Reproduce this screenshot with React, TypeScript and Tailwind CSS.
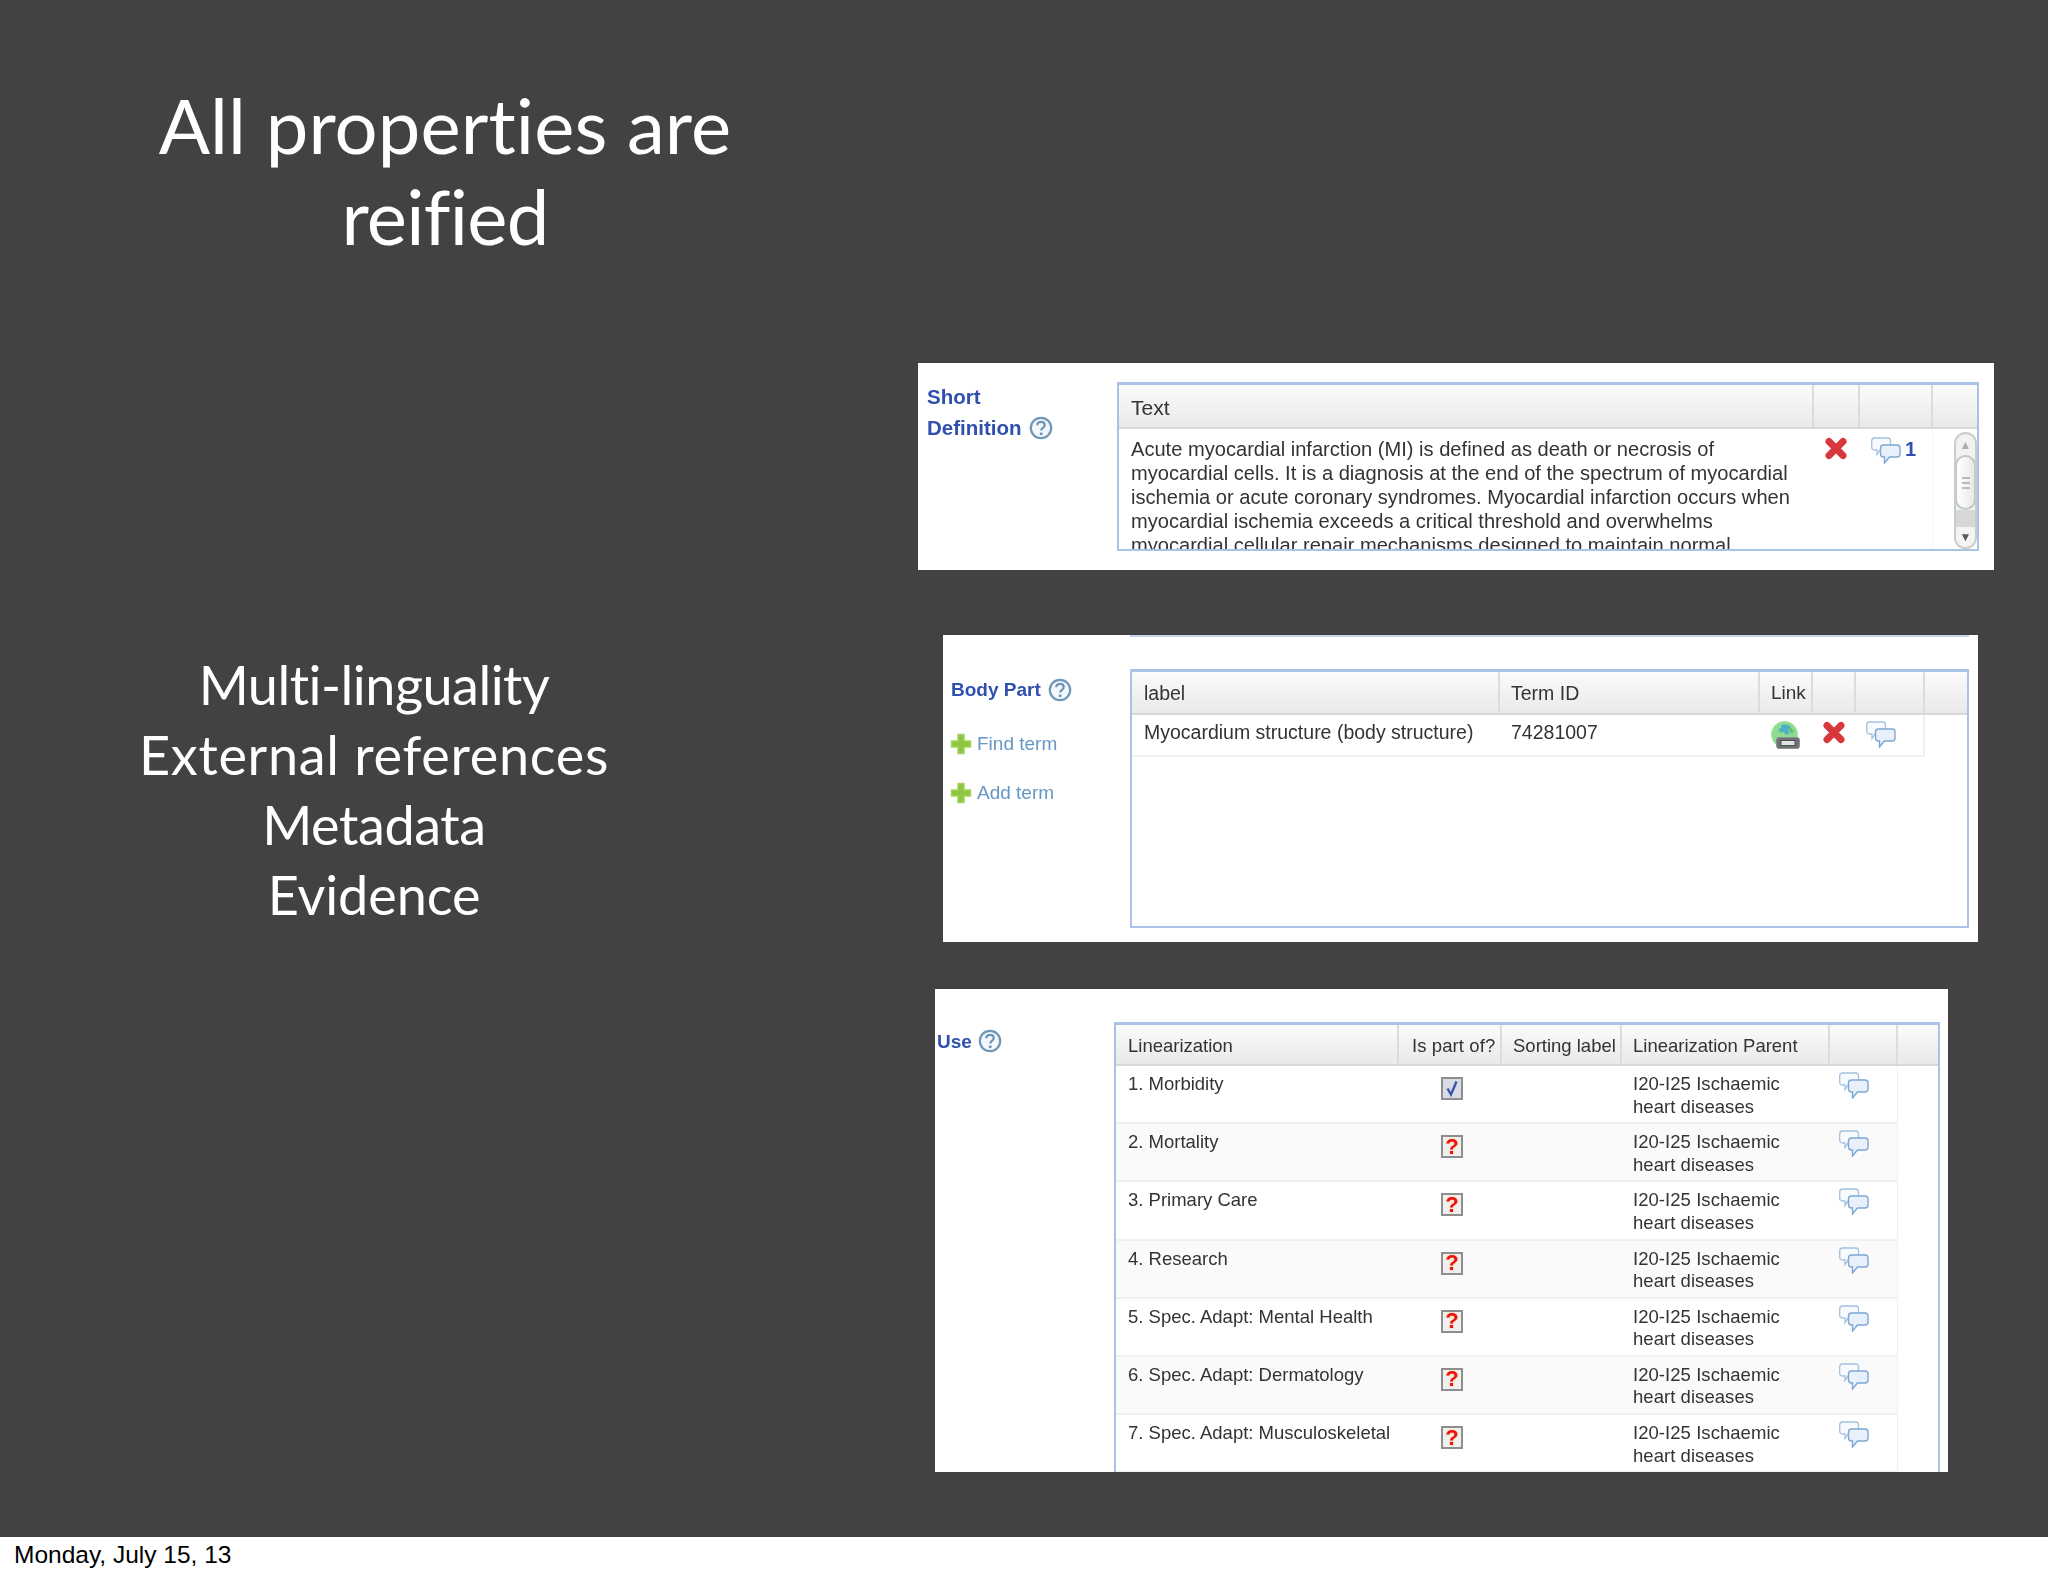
import React from "react";

const sans = "font-['Liberation_Sans',Arial,sans-serif]";

const definition = [
  "Acute myocardial infarction (MI) is defined as death or necrosis of",
  "myocardial cells. It is a diagnosis at the end of the spectrum of myocardial",
  "ischemia or acute coronary syndromes. Myocardial infarction occurs when",
  "myocardial ischemia exceeds a critical threshold and overwhelms",
  "myocardial cellular repair mechanisms designed to maintain normal",
];

const linearizations = [
  { name: "1. Morbidity", checked: true },
  { name: "2. Mortality", checked: false },
  { name: "3. Primary Care", checked: false },
  { name: "4. Research", checked: false },
  { name: "5. Spec. Adapt: Mental Health", checked: false },
  { name: "6. Spec. Adapt: Dermatology", checked: false },
  { name: "7. Spec. Adapt: Musculoskeletal", checked: false },
];

function HelpIcon() {
  return (
    <svg width="24" height="24" viewBox="0 0 24 24" className="shrink-0">
      <circle cx="12" cy="12" r="10.2" fill="#f4f8fc" stroke="#6f97b8" strokeWidth="2.2" />
      <path d="M8.300 9.300c0-2.300 1.700-3.500 3.800-3.500s3.600 1.300 3.600 3.300c0 2.800-3.500 2.700-3.500 5.500" fill="none" stroke="#6f97b8" strokeWidth="2.300" />
      <circle cx="12.200" cy="17.800" r="1.500" fill="#6f97b8" />
    </svg>
  );
}

function RemoveIcon() {
  return (
    <svg width="24" height="23" viewBox="0 0 24 23" className="shrink-0">
      <path d="M5 4.500l14 14M19 4.500l-14 14" fill="none" stroke="#d8373c" strokeWidth="7" strokeLinecap="round" />
    </svg>
  );
}

function ChatIcon() {
  return (
    <svg width="30" height="27" viewBox="0 0 30 27" className="shrink-0">
      <path
        d="M3.500 1h13c1.700 0 3 1.300 3 3v6c0 1.700-1.300 3-3 3H9l-3 4.500V13H3.500C1.800 13 .7 11.700.7 10V4C.7 2.300 1.800 1 3.500 1z"
        fill="#f8fbfe"
        stroke="#a3c1e0"
        strokeWidth="1.300"
      />
      <path
        d="M12.500 8h13.500c1.700 0 3 1.300 3 3v6c0 1.700-1.300 3-3 3h-7.500l-5 6v-6h-1c-1.700 0-3-1.300-3-3v-6c0-1.700 1.300-3 3-3z"
        fill="#e8f1fb"
        stroke="#7fa6d4"
        strokeWidth="1.400"
      />
    </svg>
  );
}

function PlusIcon() {
  return (
    <svg width="22" height="22" viewBox="0 0 22 22" className="shrink-0">
      <path
        d="M8 1.500h6v6.500h6.500v6H14v6.500H8V14H1.500V8H8z"
        fill="#8cc63f"
        stroke="#a3d35c"
        strokeWidth="1.500"
        strokeLinejoin="round"
      />
    </svg>
  );
}

function GlobeIcon() {
  return (
    <svg width="29" height="28" viewBox="0 0 29 28" className="shrink-0">
      <circle cx="13.500" cy="13.500" r="13" fill="#8fdc8f" stroke="#a6dca6" strokeWidth="1" />
      <path d="M10 4c4-1 7-.5 10 2l-3 3 2 3-4 2-2-3-4 .5-1.500-3.500 3-1z" fill="#4db0c4" />
      <path d="M19 6l4 4-2 3-3-4z" fill="#62c070" />
      <rect x="5.500" y="16.500" width="23" height="11" rx="2.500" fill="#6c7272" stroke="#8b9090" />
      <rect x="10" y="19.500" width="14" height="5" fill="#dfe2e2" stroke="#4a4f4f" />
    </svg>
  );
}

function CheckBox({ checked }: { checked: boolean }) {
  return (
    <div className={`w-[22px] h-[23px] border-2 border-[#8e8e8e] flex items-center justify-center ${checked ? "bg-[#d9dce6]" : "bg-[#f1f0ee]"}`}>
      {checked ? (
        <svg width="16" height="17" viewBox="0 0 16 17">
          <path d="M3.500 8.500l3.500 6 5.500-13" fill="none" stroke="#3c57a6" strokeWidth="2.400" />
        </svg>
      ) : (
        <span className={`${sans} text-[22px] font-bold leading-none text-[#ee1111] [text-shadow:0_0_2px_#f7c873]`}>?</span>
      )}
    </div>
  );
}

function HeadCell({ w, children, grow, pad = "pl-[12px]", top = "" }: { w?: string; children?: React.ReactNode; grow?: boolean; pad?: string; top?: string }) {
  return (
    <div className={`${w ?? ""} ${grow ? "flex-1" : "shrink-0"} ${pad} ${top} h-full flex items-center border-r-2 border-[#dcdcdc] last:border-r-0 whitespace-nowrap`}>
      {children}
    </div>
  );
}

function Scrollbar() {
  return (
    <div className="w-[23px] h-[117px] mt-[3px] ml-[21px] rounded-full border-2 border-[#c8cdc8] bg-[#f2f2f2] flex flex-col items-center overflow-hidden">
      <div className="h-[21px] shrink-0 flex items-center justify-center text-[12px] leading-none text-[#a9b0ae]">▲</div>
      <div className="w-[21px] h-[55px] shrink-0 rounded-full border-2 border-[#c3cac6] bg-gradient-to-r from-[#ffffff] to-[#e9e9e9] flex flex-col gap-[3px] items-center justify-center">
        <div className="w-[8px] h-[2px] bg-[#b5bcb9]" />
        <div className="w-[8px] h-[2px] bg-[#b5bcb9]" />
        <div className="w-[8px] h-[2px] bg-[#b5bcb9]" />
      </div>
      <div className="flex-1 w-full bg-[#d6d8d6]" />
      <div className="h-[20px] shrink-0 w-full bg-[#f4f4f4] flex items-center justify-center text-[12px] leading-none text-[#555b5b]">▼</div>
    </div>
  );
}

function ShortDefinition() {
  return (
    <div className={`${sans} w-[1076px] h-[207px] bg-white flex text-[20.100px] text-[#333333]`}>
      <div className="w-[199px] shrink-0 pl-[9px] pt-[18px] text-[20.500px] leading-[31px] font-bold text-[#2f50ae]">
        <div>Short</div>
        <div className="flex items-center gap-[7px]">
          Definition <HelpIcon />
        </div>
      </div>
      <div className="w-[862px] h-[169px] mt-[19px] border-2 border-t-[3px] border-[#a9c3e6] flex flex-col overflow-hidden">
        <div className="h-[44px] shrink-0 flex bg-gradient-to-b from-[#fbfbfb] to-[#e9e9e9] border-b-2 border-[#d8d8d8]">
          <HeadCell w="w-[695px]" top="pt-[4px]">
            <span className="text-[21px]">Text</span>
          </HeadCell>
          <HeadCell w="w-[46px]" />
          <HeadCell w="w-[73px]" />
          <HeadCell grow />
        </div>
        <div className="flex flex-1 min-h-0">
          <div className="w-[695px] shrink-0 pl-[12px] pt-[8px] leading-[24px] whitespace-nowrap">
            {definition.map((line) => (
              <div key={line}>{line}</div>
            ))}
          </div>
          <div className="w-[46px] shrink-0 pt-[8px] pl-[10px]">
            <RemoveIcon />
          </div>
          <div className="w-[73px] shrink-0 pt-[8px] pl-[11px] flex items-start gap-[4px] border-r border-[#f4f4f4] h-full">
            <ChatIcon />
            <span className="font-bold text-[#2f50ae] leading-[24px]">1</span>
          </div>
          <Scrollbar />
        </div>
      </div>
    </div>
  );
}

function BodyPart() {
  return (
    <div className={`${sans} w-[1035px] h-[307px] ml-[25px] bg-white flex flex-col text-[19.500px] text-[#333333]`}>
      <div className="h-[2px] ml-[187px] w-[839px] bg-[#c3d6ea]" />
      <div className="flex flex-1">
        <div className="w-[187px] shrink-0 pl-[7px] pt-[41px] text-[19px]">
          <div className="flex items-center gap-[7px] font-bold text-[#2f50ae] h-[24px]">
            <span className="ml-[1px]">Body Part</span>
            <HelpIcon />
          </div>
          <div className="flex items-center gap-[5px] mt-[30px] text-[#6497c4] h-[24px]">
            <PlusIcon />
            Find term
          </div>
          <div className="flex items-center gap-[5px] mt-[25px] text-[#6497c4] h-[24px]">
            <PlusIcon />
            Add term
          </div>
        </div>
        <div className="w-[839px] h-[259px] mt-[32px] border-2 border-t-[3px] border-[#a9c3e6] flex flex-col">
          <div className="h-[43px] shrink-0 flex bg-gradient-to-b from-[#fbfbfb] to-[#e9e9e9] border-b-2 border-[#d8d8d8]">
            <HeadCell w="w-[368px]" top="pt-[2px]">label</HeadCell>
            <HeadCell w="w-[260px]" pad="pl-[11px]" top="pt-[2px]">Term ID</HeadCell>
            <HeadCell w="w-[53px]" pad="pl-[11px]" top="pt-[2px]"><span className="text-[19px]">Link</span></HeadCell>
            <HeadCell w="w-[43px]" />
            <HeadCell w="w-[69px]" />
            <HeadCell grow />
          </div>
          <div className="h-[42px] w-[793px] flex border-b-2 border-r-2 border-[#efefef]">
            <div className="w-[368px] shrink-0 pl-[12px] pt-[5px] leading-[24px] whitespace-nowrap">Myocardium structure (body structure)</div>
            <div className="w-[260px] shrink-0 pl-[11px] pt-[5px] leading-[24px]">74281007</div>
            <div className="w-[53px] shrink-0 pl-[11px] pt-[6px]">
              <GlobeIcon />
            </div>
            <div className="w-[43px] shrink-0 pl-[9px] pt-[6px]">
              <RemoveIcon />
            </div>
            <div className="pl-[10px] pt-[6px]">
              <ChatIcon />
            </div>
          </div>
        </div>
      </div>
    </div>
  );
}

function UseTable() {
  return (
    <div className={`${sans} w-[1013px] h-[483px] ml-[17px] bg-white flex text-[18.500px] leading-[22.500px] text-[#333333] overflow-hidden`}>
      <div className="w-[179px] shrink-0 pl-[2px] pt-[40px] flex items-start gap-[6px] font-bold text-[19px] text-[#2f50ae]">
        <span className="mt-[2px]">Use</span>
        <HelpIcon />
      </div>
      <div className="w-[826px] h-[490px] mt-[33px] border-2 border-t-[3px] border-b-0 border-[#a9c3e6] flex flex-col">
        <div className="h-[41px] shrink-0 flex bg-gradient-to-b from-[#fbfbfb] to-[#e9e9e9] border-b-2 border-[#d8d8d8]">
          <HeadCell w="w-[283px]" top="pt-[4px]">Linearization</HeadCell>
          <HeadCell w="w-[103px]" pad="pl-[13px]" top="pt-[4px]"><span className="tracking-[0.100px]">Is part of?</span></HeadCell>
          <HeadCell w="w-[120px]" pad="pl-[11px]" top="pt-[4px]">Sorting label</HeadCell>
          <HeadCell w="w-[208px]" pad="pl-[11px]" top="pt-[4px]">Linearization Parent</HeadCell>
          <HeadCell w="w-[68px]" />
          <HeadCell grow />
        </div>
        {linearizations.map((row, i) => (
          <div
            key={row.name}
            className={`h-[58.200px] shrink-0 w-[782px] flex border-b-2 border-r border-[#f0f0f0] ${i % 2 === 1 ? "bg-[#fafafa]" : "bg-white"}`}
          >
            <div className="w-[283px] shrink-0 pl-[12px] pt-[7px] whitespace-nowrap">{row.name}</div>
            <div className="w-[103px] shrink-0 pl-[42px] pt-[11px]">
              <CheckBox checked={row.checked} />
            </div>
            <div className="w-[120px] shrink-0" />
            <div className="w-[208px] shrink-0 pl-[11px] pt-[7px] whitespace-nowrap tracking-[0.050px]">
              I20-I25 Ischaemic
              <br />
              heart diseases
            </div>
            <div className="pl-[9px] pt-[6px]">
              <ChatIcon />
            </div>
          </div>
        ))}
      </div>
    </div>
  );
}

export default function App() {
  return (
    <div className="w-[2048px] h-[1576px] flex flex-col bg-white overflow-hidden">
      <div className="h-[1537px] shrink-0 bg-[#424242] flex">
        <div className="w-[918px] shrink-0 font-['Lato',sans-serif] text-white text-center">
          <div className="w-[890px] pt-[79px] text-[76px] leading-[91px]">
            <span className="[font-variant-ligatures:none] tracking-[0.100px]">All properties are</span>
            <br />
            <span className="tracking-[-0.700px]">reified</span>
          </div>
          <div className="w-[748px] mt-[389px] text-[54px] leading-[70px] [font-variant-ligatures:none]">
            <div className="tracking-[-0.500px]">Multi-linguality</div>
            <div className="tracking-[0.700px]">External references</div>
            <div className="tracking-[-0.400px]">Metadata</div>
            <div className="tracking-[-0.100px]">Evidence</div>
          </div>
        </div>
        <div className="flex flex-col pt-[363px] blur-[0.4px]">
          <ShortDefinition />
          <div className="mt-[65px]">
            <BodyPart />
          </div>
          <div className="mt-[47px]">
            <UseTable />
          </div>
        </div>
      </div>
      <div className={`${sans} flex-1 pl-[14px] pt-[2px] text-[24.500px] leading-[32px] text-black`}>Monday, July 15, 13</div>
    </div>
  );
}
